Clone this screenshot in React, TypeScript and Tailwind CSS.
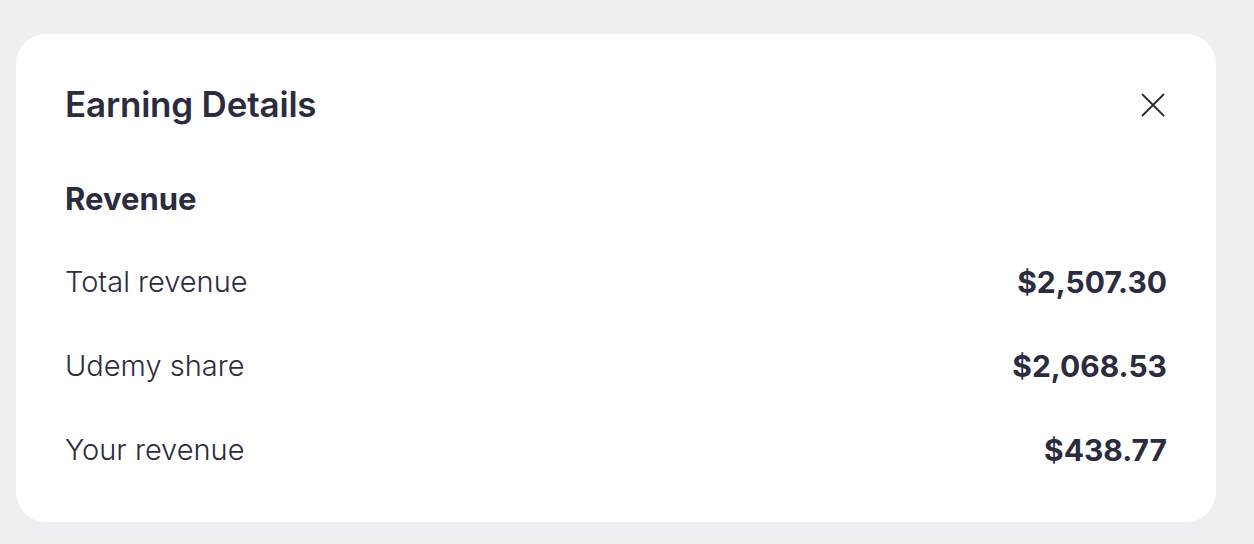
import React from "react";

const rows = [
  { label: "Total revenue", value: "$2,507.30" },
  { label: "Udemy share", value: "$2,068.53" },
  { label: "Your revenue", value: "$438.77" },
];

export default function App() {
  return (
    <div
      className="w-[1254px] h-[544px] bg-[#eeeef3] pt-[34px] pl-[16px] overflow-hidden"
      style={{ fontFamily: "Inter, 'Liberation Sans', sans-serif" }}
    >
      <div className="w-[1200px] h-[488px] bg-white rounded-[30px] px-[49px] pt-[50px] text-[#2b2c40]">
        <div className="flex items-center justify-between h-[40px]">
          <h1 className="text-[35px] leading-[40px] font-semibold tracking-[-0.2px]">Earning Details</h1>
          <svg width="24" height="24" viewBox="0 0 24 24" className="mr-[2px] mt-[2px]" fill="none" stroke="#2b2c40" strokeWidth="1.8" strokeLinecap="round">
            <path d="M1.5 1.5 L22.5 22.5 M22.5 1.5 L1.5 22.5" />
          </svg>
        </div>
        <div className="mt-[57px] text-[31px] leading-[36px] font-bold">Revenue</div>
        <div className="mt-[47px] flex flex-col gap-[48px]">
          {rows.map((r) => (
            <div key={r.label} className="flex items-center justify-between h-[36px]">
              <span className="text-[29px] font-light">{r.label}</span>
              <span className="text-[30px] font-bold">{r.value}</span>
            </div>
          ))}
        </div>
      </div>
    </div>
  );
}
